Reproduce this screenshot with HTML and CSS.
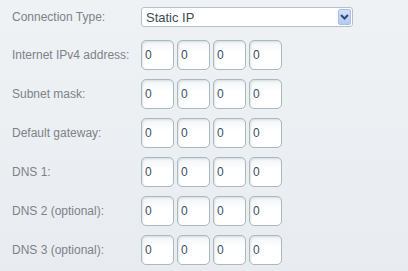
FILE: index.html
```html
<!DOCTYPE html>
<html lang="en">
<head>
  <meta charset="UTF-8">
  <meta name="viewport" content="width=device-width, initial-scale=1.0">
  <title>Internet Setup</title>
  <link rel="stylesheet" href="styles.css">
</head>
<body>
  <div class="form">
    <div class="row row-select">
      <label>Connection Type:</label>
      <div class="select">
        <span class="select-value">Static IP</span>
        <span class="select-btn">
          <svg width="9" height="6" viewBox="0 0 9 6"><path d="M1 1 L4.5 4.5 L8 1" fill="none" stroke="#2f4a74" stroke-width="2"/></svg>
        </span>
      </div>
    </div>

    <div class="row">
      <label>Internet IPv4 address:</label>
      <div class="ip"><input value="0"><input value="0"><input value="0"><input value="0"></div>
    </div>

    <div class="row">
      <label>Subnet mask:</label>
      <div class="ip"><input value="0"><input value="0"><input value="0"><input value="0"></div>
    </div>

    <div class="row">
      <label>Default gateway:</label>
      <div class="ip"><input value="0"><input value="0"><input value="0"><input value="0"></div>
    </div>

    <div class="row">
      <label>DNS 1:</label>
      <div class="ip"><input value="0"><input value="0"><input value="0"><input value="0"></div>
    </div>

    <div class="row">
      <label>DNS 2 (optional):</label>
      <div class="ip"><input value="0"><input value="0"><input value="0"><input value="0"></div>
    </div>

    <div class="row">
      <label>DNS 3 (optional):</label>
      <div class="ip"><input value="0"><input value="0"><input value="0"><input value="0"></div>
    </div>
  </div>
</body>
</html>
```

FILE: styles.css
```css
html, body {
  margin: 0;
  padding: 0;
  height: 271px;
}

body {
  font-family: 'Liberation Sans', Arial, sans-serif;
  background: linear-gradient(#eff2f5, #e8ecf0);
  overflow: hidden;
}

.form {
  display: flex;
  flex-direction: column;
  gap: 9px;
  padding: 7px 0 0 12px;
}

.row {
  display: flex;
  align-items: center;
  height: 30px;
}

.row-select {
  height: 20px;
  margin-bottom: 4px;
}

label {
  width: 129px;
  font-size: 12px;
  color: #7d8288;
}

.select {
  box-sizing: border-box;
  width: 212px;
  height: 20px;
  display: flex;
  align-items: center;
  justify-content: space-between;
  background: #fff;
  border: 1px solid #b3c2c8;
  border-radius: 3px;
  padding: 0 1px 0 4px;
}

.select-value {
  font-size: 13px;
  color: #3b4b57;
}

.select-btn {
  box-sizing: border-box;
  width: 13px;
  height: 16px;
  display: flex;
  align-items: center;
  justify-content: center;
  background: linear-gradient(#d3e0fb, #b3c8f3);
  border: 1px solid #a9bde6;
  border-radius: 2px;
}

.ip {
  display: flex;
  gap: 3px;
}

.ip input {
  box-sizing: border-box;
  width: 33px;
  height: 30px;
  margin: 0;
  padding: 0 0 0 3px;
  border: 1px solid #aab9bd;
  border-radius: 5px;
  background: linear-gradient(#f1f4f6, #fff 40%);
  box-shadow: inset 1px 1px 2px rgba(160, 175, 185, 0.35);
  font-family: 'Liberation Sans', Arial, sans-serif;
  font-size: 12px;
  color: #3a4f5f;
  outline: none;
}
```
